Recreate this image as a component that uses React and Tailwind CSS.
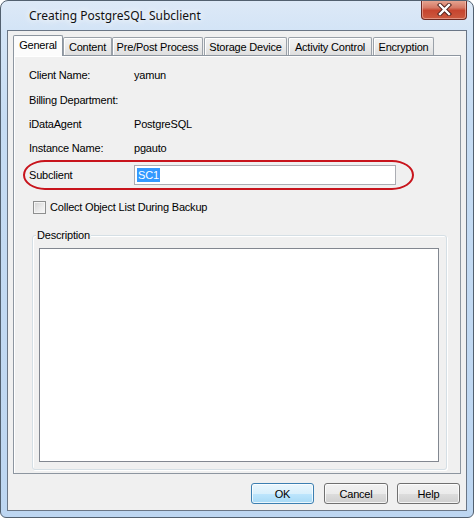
import React from "react";

const ui = "font-['Liberation_Sans',Arial,sans-serif] text-[11px] tracking-[-0.2px] text-black";

function Tab({ label, width, selected }) {
  if (selected) {
    return (
      <div
        className={`relative z-10 -mb-px flex h-[21px] items-start justify-center rounded-t-[2px] border border-b-0 border-[#8d96a0] bg-[#fcfcfc] pt-[2px] ${width}`}
      >
        <span className="leading-[14px]">{label}</span>
      </div>
    );
  }
  return (
    <div
      className={`flex h-[18px] items-center justify-center rounded-t-[2px] border border-b-0 border-[#9aa1a9] bg-[linear-gradient(180deg,#f3f3f3_0%,#ebebeb_50%,#dedede_100%)] shadow-[inset_1px_1px_0_#fff] ${width}`}
    >
      <span className="leading-[14px]">{label}</span>
    </div>
  );
}

function InfoRow({ label, value, h }) {
  return (
    <div className={`flex items-center ${h}`}>
      <span className="w-[105px] leading-[14px]">{label}</span>
      <span className="leading-[14px]">{value}</span>
    </div>
  );
}

function Button({ children, primary, width }) {
  return (
    <button
      className={`flex h-[21px] items-center justify-center rounded-[3px] border ${width} ${
        primary
          ? "border-[#3c7fb1] bg-[linear-gradient(180deg,#eaf6fd_0%,#d9f0fc_50%,#bee6fd_51%,#a7d9f5_100%)]"
          : "border-[#707070] bg-[linear-gradient(180deg,#f2f2f2_0%,#ebebeb_50%,#dddddd_51%,#cfcfcf_100%)]"
      } shadow-[inset_0_0_0_1px_rgba(255,255,255,0.75)]`}
    >
      <span className="leading-[14px]">{children}</span>
    </button>
  );
}

export default function App() {
  return (
    <div
      className={`relative flex h-[518px] w-[474px] flex-col overflow-hidden rounded-t-[8px] rounded-b-[6px] border border-[#52606f] bg-[linear-gradient(180deg,#dde9f7_0px,#d3e4f6_30px,#c6dcf3_120px,#bdd6f1_518px)] ${ui}`}
    >
      {/* title bar */}
      <div className="flex h-[29px] shrink-0 items-center pl-[28px]">
        <span className="font-['Noto_Sans',sans-serif] text-[12px] tracking-normal text-[#111] [text-shadow:0_0_6px_#fff,0_0_10px_#fff]">
          Creating PostgreSQL Subclient
        </span>
      </div>

      {/* close button */}
      <div className="absolute top-[-1px] right-[6px] flex h-[20px] w-[46px] items-center justify-center rounded-b-[4px] border border-t-0 border-[#6e2a22] bg-[linear-gradient(180deg,#e8a995_0%,#d67a66_40%,#c6452f_55%,#cc5a3f_100%)] shadow-[inset_0_0_0_1px_rgba(255,220,210,0.45)]">
        <svg width="15" height="13" viewBox="0 0 15 13">
          <path d="M3 2 L12 11 M12 2 L3 11" stroke="#4a1d18" strokeWidth="4.2" strokeLinecap="square" />
          <path d="M3 2 L12 11 M12 2 L3 11" stroke="#ffffff" strokeWidth="2.4" strokeLinecap="square" />
        </svg>
      </div>

      {/* client area */}
      <div className="mx-[6px] mb-[6px] flex flex-1 flex-col border border-[#6a7686] bg-[#f0f0f0] pt-[4px] pl-[5px]">
        {/* tab strip */}
        <div className="flex h-[20px] items-end">
          <Tab label="General" width="w-[50px]" selected />
          <Tab label="Content" width="w-[49px]" />
          <Tab label="Pre/Post Process" width="w-[91px]" />
          <div className="w-px" />
          <Tab label="Storage Device" width="w-[83px]" />
          <div className="w-px" />
          <Tab label="Activity Control" width="w-[84px]" />
          <div className="w-px" />
          <Tab label="Encryption" width="w-[61px]" />
        </div>

        {/* tab panel */}
        <div className="flex h-[419px] w-[448px] flex-col border border-[#8d96a0] bg-[#f0f0f0] pt-[7px] pl-[15px] shadow-[inset_1px_1px_0_#fff]">
          <InfoRow label="Client Name:" value="yamun" h="h-[24px]" />
          <InfoRow label="Billing Department:" value="" h="h-[25px]" />
          <InfoRow label="iDataAgent" value="PostgreSQL" h="h-[24px]" />
          <InfoRow label="Instance Name:" value="pgauto" h="h-[24px]" />

          {/* subclient name field, circled in red */}
          <div className="relative flex h-[30px] items-center">
            <span className="w-[105px] leading-[14px]">Subclient</span>
            <div className="flex h-[20px] w-[262px] items-center border border-[#abadb3] bg-white pl-[2px]">
              <span className="bg-[#3399ff] px-px leading-[14px] text-white">SC1</span>
            </div>
            <div className="pointer-events-none absolute inset-y-0 -left-[6px] w-[391px] rounded-[22px/15px] border-2 border-[#c8141c]" />
          </div>

          {/* checkbox */}
          <div className="flex h-[34px] items-center pl-[4px]">
            <div className="h-[13px] w-[13px] border border-[#8e8f8f] bg-[linear-gradient(135deg,#d2d2d2_0%,#ececec_60%,#f8f8f8_100%)] shadow-[inset_0_0_0_1px_#f4f4f4]" />
            <span className="ml-[4px] leading-[14px]">Collect Object List During Backup</span>
          </div>

          {/* description group */}
          <div className="relative mt-[11px] ml-[3px] h-[235px] w-[415px] rounded-[3px] border border-[#d5dfe5] shadow-[inset_1px_1px_0_#fff,1px_1px_0_#fff]">
            <span className="absolute -top-[8px] left-[3px] bg-[#f0f0f0] px-px leading-[14px]">Description</span>
            <div className="mt-[12px] ml-[6px] h-[214px] w-[400px] border border-[#828790] bg-white" />
          </div>
        </div>

        {/* dialog buttons */}
        <div className="mt-[9px] flex w-[447px] justify-end">
          <Button primary width="w-[63px]">OK</Button>
          <div className="w-[10px]" />
          <Button width="w-[64px]">Cancel</Button>
          <div className="w-[9px]" />
          <Button width="w-[63px]">Help</Button>
        </div>
      </div>
    </div>
  );
}
